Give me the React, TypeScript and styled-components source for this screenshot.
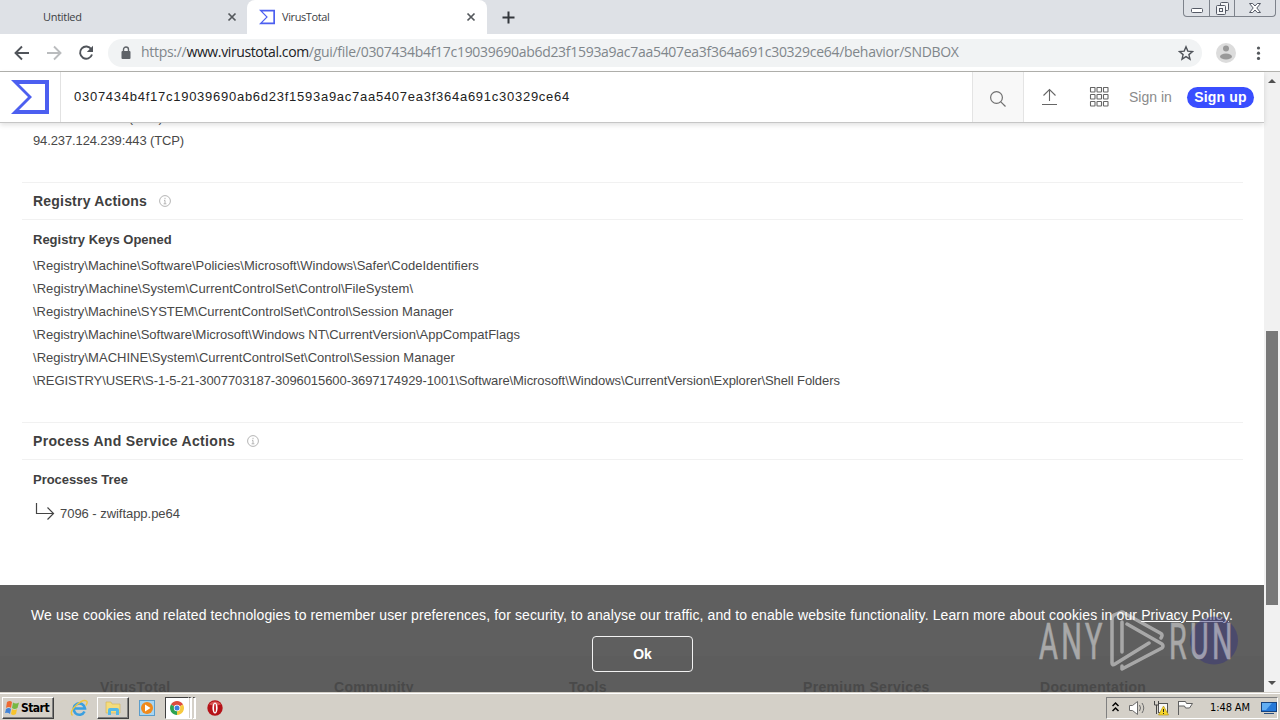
import React from 'react';
import styled, { createGlobalStyle } from 'styled-components';

const GlobalStyle = createGlobalStyle`
  * { box-sizing: border-box; }
  body { margin: 0; overflow: hidden; font-family: 'Liberation Sans', Arial, sans-serif; }
`;

const Desktop = styled.div`
  position: relative;
  display: flex;
  flex-direction: column;
  width: 1280px;
  height: 720px;
  overflow: hidden;
  background: #fff;
`;

const TabStrip = styled.div`
  display: flex;
  height: 34px;
  background: #dee1e6;
`;

const Tab = styled.div<{ $active?: boolean; $width: number }>`
  display: flex;
  align-items: center;
  width: ${(p) => p.$width}px;
  padding: 0 ${(p) => (p.$active ? '11px 0 12px' : '10px 0 43px')};
  border-radius: 8px 8px 0 0;
  background: ${(p) => (p.$active ? '#fff' : 'transparent')};
`;

const TabTitle = styled.span<{ $spacing: number; $gap?: number }>`
  flex: 1;
  margin-left: ${(p) => p.$gap || 0}px;
  padding-bottom: 2px;
  font-family: 'Open Sans', sans-serif;
  font-size: 11px;
  letter-spacing: ${(p) => p.$spacing}px;
  color: #3c4043;
`;

const NewTab = styled.div`
  display: flex;
  align-items: center;
  margin-left: 15px;
`;

const WindowControls = styled.div`
  display: flex;
  height: 17px;
  margin: 0 4px 0 auto;
  border: 1px solid #7d828b;
  border-top: 0;
  border-radius: 0 0 4px 4px;
`;

const WindowButton = styled.div<{ $width: number }>`
  display: flex;
  justify-content: center;
  width: ${(p) => p.$width}px;

  & + & {
    border-left: 1px solid #7d828b;
  }
`;

const Toolbar = styled.div`
  display: flex;
  align-items: center;
  height: 38px;
  padding: 0 14px;
  border-bottom: 1px solid #b2b2ae;
`;

const NavIcons = styled.div`
  display: flex;
  gap: 16px;
  width: 94px;
`;

const AddressBar = styled.div`
  display: flex;
  align-items: center;
  width: 1094px;
  height: 28px;
  padding: 0 8px 0 12px;
  border-radius: 14px;
  background: #f1f3f4;
`;

const Url = styled.div`
  flex: 1;
  margin-left: 9px;
  padding-bottom: 2px;
  font-family: 'Open Sans', sans-serif;
  font-size: 14px;
  letter-spacing: -0.29px;
  white-space: nowrap;
  color: #80868b;

  b {
    font-weight: 400;
    letter-spacing: -0.38px;
    color: #202124;
  }
`;

const Viewport = styled.div`
  display: flex;
  height: 620px;
`;

const Page = styled.div`
  position: relative;
  display: flex;
  flex-direction: column;
  width: 1264px;
  background: #fff;
`;

const Header = styled.header`
  z-index: 1;
  display: flex;
  align-items: center;
  flex: none;
  height: 51px;
  border-bottom: 1px solid #c6c6c6;
  background: #fff;
  box-shadow: 0 2px 5px rgba(0, 0, 0, 0.12);
`;

const LogoCell = styled.div`
  display: flex;
  align-items: center;
  width: 61px;
  height: 50px;
  padding-left: 11px;
  border-right: 1px solid #e2e2e2;
`;

const SearchText = styled.div`
  flex: 1;
  padding: 0 0 1px 13px;
  font-size: 13px;
  letter-spacing: 0.735px;
  color: #222;
`;

const SearchCell = styled.div`
  display: flex;
  align-items: center;
  justify-content: center;
  width: 52px;
  height: 50px;
  padding-top: 3px;
  border: solid #e4e4e4;
  border-width: 0 1px;
  background: #f8f8f8;
`;

const HeaderActions = styled.div`
  display: flex;
  align-items: center;
  width: 240px;
  padding-left: 16px;
`;

const SignIn = styled.span`
  width: 58px;
  margin-left: 19px;
  font-size: 14px;
  letter-spacing: 0;
  color: #8b8b8b;
`;

const SignUp = styled.span`
  width: 67px;
  height: 21px;
  border-radius: 11px;
  background: #394eff;
  font-size: 14px;
  font-weight: 700;
  line-height: 21px;
  letter-spacing: 0.15px;
  text-align: center;
  color: #fff;
`;

const Report = styled.main`
  flex: 1;
  min-height: 0;
  overflow: hidden;
  padding: 0 21px 0 22px;
`;

const List = styled.div<{ $shift?: number }>`
  margin-top: ${(p) => p.$shift || 0}px;
  padding-left: 11px;
`;

const Line = styled.div<{ $spacing?: number }>`
  height: 23px;
  font-size: 13px;
  line-height: 23px;
  letter-spacing: ${(p) => p.$spacing || 0}px;
  white-space: nowrap;
  color: #484848;
`;

const SectionTitle = styled.div<{ $spacing: number }>`
  display: flex;
  align-items: center;
  gap: 12px;
  height: 38px;
  margin-top: 30px;
  padding-left: 11px;
  border: solid #f1f1f1;
  border-width: 1px 0;
  font-size: 14px;
  font-weight: 700;
  letter-spacing: ${(p) => p.$spacing}px;
  color: #404040;
`;

const SubTitle = styled.div<{ $spacing?: number }>`
  height: 34px;
  padding-left: 11px;
  font-size: 13px;
  font-weight: 700;
  line-height: 39px;
  letter-spacing: ${(p) => p.$spacing || 0}px;
  color: #404040;
`;

const ProcessRow = styled.div`
  display: flex;
  align-items: center;
  gap: 5px;
  height: 38px;
  padding-left: 13px;
`;

const CookieBanner = styled.div`
  position: absolute;
  right: 0;
  bottom: 0;
  left: 0;
  display: flex;
  flex-direction: column;
  align-items: center;
  height: 107px;
  overflow: hidden;
  background: linear-gradient(#5f5f5f 71px, #5d5d5d 71px);
`;

const CookieText = styled.p`
  align-self: flex-start;
  height: 20px;
  margin: 20px 0 11px 31px;
  font-size: 14px;
  line-height: 20px;
  letter-spacing: 0.118px;
  white-space: nowrap;
  color: #fff;
`;

const OkButton = styled.button`
  width: 101px;
  height: 36px;
  flex: none;
  margin-left: 21px;
  padding: 0;
  border: 1px solid #f2f2f2;
  border-radius: 4px;
  background: transparent;
  font: 700 14px 'Liberation Sans', sans-serif;
  color: #fff;
`;

const FooterLinks = styled.div`
  display: grid;
  grid-template-columns: 234px 235px 234px 237px auto;
  align-self: flex-start;
  margin: 7px 0 0 100px;
  font-size: 14px;
  font-weight: 700;
  line-height: 16px;
  letter-spacing: 0.33px;
  color: #494949;
`;

const Scrollbar = styled.div`
  display: flex;
  flex-direction: column;
  align-items: center;
  width: 16px;
  padding: 7px 0;
  background: #f1f1f1;
`;

const Thumb = styled.div`
  width: 12px;
  height: 274px;
  margin: 248px 0 auto;
  background: #787878;
`;

const Arrow = styled.div<{ $down?: boolean }>`
  width: 8px;
  height: 4px;
  background: #505050;
  clip-path: ${(p) => (p.$down ? 'polygon(0 0, 100% 0, 50% 100%)' : 'polygon(50% 0, 100% 100%, 0 100%)')};
`;

const Taskbar = styled.div`
  display: flex;
  align-items: center;
  height: 28px;
  padding: 2px 2px 0;
  border-top: 1px solid #d4d0c8;
  background: #d4d0c8;
  box-shadow: inset 0 1px #fff;
`;

const TaskButton = styled.div<{ $width: number; $flat?: boolean; $pressed?: boolean }>`
  display: flex;
  align-items: center;
  justify-content: center;
  width: ${(p) => p.$width}px;
  height: 22px;
  border: ${(p) => (p.$flat ? 0 : 1)}px solid;
  border-color: ${(p) => (p.$pressed ? '#404040 #fff #fff #404040' : '#fff #404040 #404040 #fff')};
  box-shadow: ${(p) => (p.$flat || p.$pressed ? 'none' : 'inset -1px -1px #808080')};
  background: ${(p) => (p.$pressed ? '#fff' : '#d4d0c8')};
`;

const BrowserLauncher = styled(TaskButton)`
  padding-left: 7px;
`;

const StartLabel = styled.span`
  margin: 0 2px 0 1px;
  font: 700 12px 'DejaVu Sans Condensed', 'DejaVu Sans', sans-serif;
  letter-spacing: -0.5px;
  color: #000;
`;

const WindowStack = styled.div`
  width: 3px;
  height: 22px;
  margin-right: 1px;
  border: solid #fff;
  border-width: 1px 2px 1px 0;
  border-top-color: #404040;
`;

const Tray = styled.div`
  display: flex;
  align-items: center;
  width: 172px;
  height: 22px;
  margin-left: auto;
  padding-left: 5px;
  border: 1px solid;
  border-color: #808080 #fff #fff #808080;
`;

const Clock = styled.span`
  width: 51px;
  margin-left: 16px;
  font: 11px 'DejaVu Sans Condensed', 'DejaVu Sans', sans-serif;
  letter-spacing: -0.1px;
  white-space: nowrap;
  color: #000;
`;

const Watermark = styled.svg`
  position: absolute;
  top: 602px;
  left: 1030px;
`;

const registryKeys = [
  { path: '\\Registry\\Machine\\Software\\Policies\\Microsoft\\Windows\\Safer\\CodeIdentifiers', spacing: 0 },
  { path: '\\Registry\\Machine\\System\\CurrentControlSet\\Control\\FileSystem\\', spacing: 0.06 },
  { path: '\\Registry\\Machine\\SYSTEM\\CurrentControlSet\\Control\\Session Manager', spacing: 0.01 },
  { path: '\\Registry\\Machine\\Software\\Microsoft\\Windows NT\\CurrentVersion\\AppCompatFlags', spacing: 0 },
  { path: '\\Registry\\MACHINE\\System\\CurrentControlSet\\Control\\Session Manager', spacing: 0.02 },
  {
    path: '\\REGISTRY\\USER\\S-1-5-21-3007703187-3096015600-3697174929-1001\\Software\\Microsoft\\Windows\\CurrentVersion\\Explorer\\Shell Folders',
    spacing: -0.075,
  },
];

const VtLogo: React.FC<{ width: number; height: number }> = ({ width, height }) => (
  <svg width={width} height={height} viewBox="0 0 38 34">
    <path fill="#4c5ff0" fillRule="evenodd" d="M0 0H38V34H0L17 17ZM8 4L21 17L8 30H34V4Z" />
  </svg>
);

const CloseIcon = () => (
  <svg width="10" height="10" viewBox="0 0 10 10">
    <path d="M1.5 1.5l7 7M8.5 1.5l-7 7" stroke="#54585c" strokeWidth="1.7" />
  </svg>
);

const InfoIcon = () => (
  <svg width="12" height="12" viewBox="0 0 12 12" fill="none" stroke="#b4b4b4">
    <circle cx="6" cy="6" r="5.4" />
    <path d="M6 2.8v1.4M5 5.4h1v3.4M4.6 8.8h2.8" />
  </svg>
);

const App: React.FC = () => {
  return (
    <Desktop>
      <GlobalStyle />
      <TabStrip>
        <Tab $width={247}>
          <TabTitle $spacing={-0.3}>Untitled</TabTitle>
          <CloseIcon />
        </Tab>
        <Tab $active $width={240}>
          <VtLogo width={16} height={16} />
          <TabTitle $spacing={-0.4} $gap={7}>VirusTotal</TabTitle>
          <CloseIcon />
        </Tab>
        <NewTab>
          <svg width="13" height="13" viewBox="0 0 13 13">
            <path d="M6.5 .5v12M.5 6.5h12" stroke="#33373c" strokeWidth="2" />
          </svg>
        </NewTab>
        <WindowControls>
          <WindowButton $width={25}>
            <svg width="12" height="16" viewBox="0 0 12 16">
              <rect x=".5" y="8.5" width="11" height="4" rx="1" fill="#fff" stroke="#555a66" />
            </svg>
          </WindowButton>
          <WindowButton $width={25}>
            <svg width="13" height="16" viewBox="0 0 13 16" fill="#f4f5f7" stroke="#555a66">
              <rect x="4.5" y="2.5" width="8" height="8" rx="1" />
              <rect x=".5" y="5.5" width="9" height="9" rx="1" />
              <rect x="3.5" y="8.5" width="3" height="3" />
            </svg>
          </WindowButton>
          <WindowButton $width={41}>
            <svg width="12" height="16" viewBox="0 0 12 16">
              <path
                d="M.5 3.5h3.2L6 6l2.300-2.500h3.200L7.800 8l3.700 4.500H8.300L6 10l-2.300 2.500H.5L4.200 8z"
                fill="#fff"
                stroke="#555a66"
              />
            </svg>
          </WindowButton>
        </WindowControls>
      </TabStrip>

      <Toolbar>
        <NavIcons>
          <svg width="16" height="16" viewBox="0 0 16 16" fill="none" stroke="#50545a" strokeWidth="1.9">
            <path d="M15 8H2.500M8 1.500L1.500 8L8 14.500" />
          </svg>
          <svg width="16" height="16" viewBox="0 0 16 16" fill="none" stroke="#babcbe" strokeWidth="1.9">
            <path d="M1 8h12.500M8 1.500L14.500 8L8 14.500" />
          </svg>
          <svg width="16" height="16" viewBox="0 0 16 16">
            <path d="M13.300 4.300A6.100 6.100 0 1 0 14 9.500" fill="none" stroke="#50545a" strokeWidth="1.9" />
            <path d="M15 .8v6.200H8.800z" fill="#50545a" />
          </svg>
        </NavIcons>
        <AddressBar>
          <svg width="12" height="14" viewBox="0 0 12 14">
            <rect x="1.5" y="5" width="9" height="8" rx="1" fill="#5f6368" />
            <path d="M3.500 6V3.500a2.500 2.500 0 0 1 5 0V6" fill="none" stroke="#5f6368" strokeWidth="1.4" />
          </svg>
          <Url>
            https://<b>www.virustotal.com</b>
            /gui/file/0307434b4f17c19039690ab6d23f1593a9ac7aa5407ea3f364a691c30329ce64/behavior/SNDBOX
          </Url>
          <svg width="16" height="16" viewBox="0 0 16 16">
            <path
              d="M8 1.800l1.800 4.300 4.700.4-3.600 3.100 1.100 4.600L8 11.700l-4 2.500 1.100-4.600L1.500 6.500l4.700-.4z"
              fill="none"
              stroke="#50545a"
              strokeWidth="1.4"
            />
          </svg>
        </AddressBar>
        <svg width="64" height="20" viewBox="0 0 64 20">
          <circle cx="24" cy="10" r="10" fill="#dcdcdc" />
          <circle cx="24" cy="5.500" r="3" fill="#999" />
          <ellipse cx="24" cy="13.500" rx="6" ry="3" fill="#999" />
          <g fill="#54585c">
            <circle cx="56.500" cy="5" r="1.600" />
            <circle cx="56.500" cy="10.200" r="1.600" />
            <circle cx="56.500" cy="15.400" r="1.600" />
          </g>
        </svg>
      </Toolbar>

      <Viewport>
        <Page>
          <Header>
            <LogoCell>
              <VtLogo width={38} height={34} />
            </LogoCell>
            <SearchText>0307434b4f17c19039690ab6d23f1593a9ac7aa5407ea3f364a691c30329ce64</SearchText>
            <SearchCell>
              <svg width="16" height="16" viewBox="0 0 16 16" fill="none" stroke="#707070" strokeWidth="1.2">
                <circle cx="6.500" cy="6.500" r="5.900" />
                <path d="M10.800 10.800L15.500 15.500" />
              </svg>
            </SearchCell>
            <HeaderActions>
              <svg width="70" height="20" viewBox="0 0 70 20" fill="none" stroke="#666" strokeWidth="1.1">
                <path d="M2 17.500h15M9.500 14V3M3.500 8.500L9.500 2.500l6 6" />
                {[0.5, 7.5, 14.5].map((y) =>
                  [50.5, 57, 63.5].map((x) => <rect key={`${x}-${y}`} x={x} y={y} width="4.5" height="4.500" rx=".5" />)
                )}
              </svg>
              <SignIn>Sign in</SignIn>
              <SignUp>Sign up</SignUp>
            </HeaderActions>
          </Header>

          <Report>
            <List $shift={-17}>
              <Line $spacing={-0.12}>13.107.4.50:443 (TCP)</Line>
              <Line $spacing={-0.12}>94.237.124.239:443 (TCP)</Line>
            </List>
            <SectionTitle $spacing={0.2}>
              Registry Actions <InfoIcon />
            </SectionTitle>
            <SubTitle>Registry Keys Opened</SubTitle>
            <List>
              {registryKeys.map((key) => (
                <Line key={key.path} $spacing={key.spacing}>{key.path}</Line>
              ))}
            </List>
            <SectionTitle $spacing={0.32}>
              Process And Service Actions <InfoIcon />
            </SectionTitle>
            <SubTitle $spacing={-0.04}>Processes Tree</SubTitle>
            <ProcessRow>
              <svg width="20" height="20" viewBox="0 0 20 20" fill="none" stroke="#444" strokeWidth="1.2">
                <path d="M1.500 0v10.500H18.500M12.500 4.500l6 6-6 6" />
              </svg>
              <Line $spacing={-0.04}>7096 - zwiftapp.pe64</Line>
            </ProcessRow>
          </Report>

          <CookieBanner>
            <CookieText>
              We use cookies and related technologies to remember user preferences, for security, to analyse our
              traffic, and to enable website functionality. Learn more about cookies in our <u>Privacy Policy</u>.
            </CookieText>
            <OkButton>Ok</OkButton>
            <FooterLinks>
              <span>VirusTotal</span>
              <span>Community</span>
              <span>Tools</span>
              <span>Premium Services</span>
              <span>Documentation</span>
            </FooterLinks>
          </CookieBanner>
        </Page>
        <Scrollbar>
          <Arrow />
          <Thumb />
          <Arrow $down />
        </Scrollbar>
      </Viewport>

      <Taskbar>
        <TaskButton $width={52}>
          <svg width="15" height="16" viewBox="0 0 15 16">
            <path d="M2 2q3-2 5 0L6 8Q4 6 1 8z" fill="#ee6a32" />
            <path d="M8 2.500q3 2 6 0L12.500 8q-3 2-5.500 0z" fill="#77b843" />
            <path d="M1 9q3-2 5 0l-1 5q-2-2-5-1z" fill="#4284d8" />
            <path d="M7 9q3 2 5 0l-1 5q-3 2-5 0z" fill="#f7c42e" />
          </svg>
          <StartLabel>Start</StartLabel>
        </TaskButton>
        <BrowserLauncher $flat $width={43}>
          <svg width="18" height="18" viewBox="0 0 18 18" fill="none">
            <path d="M14.500 12.500A5.700 5.700 0 1 1 15 9.500H5" stroke="#3a9fe0" strokeWidth="2.6" />
            <path d="M2.500 16.500Q-1 13 6 6.500t10.500-4.500q1.500 1-.5 4.500" stroke="#f0c53c" strokeWidth="1.4" />
          </svg>
        </BrowserLauncher>
        <TaskButton $width={32}>
          <svg width="16" height="16" viewBox="0 0 16 16">
            <path d="M1 2h5l1 2h8v9H1z" fill="#f4dc7d" stroke="#d3b452" strokeWidth=".6" />
            <path d="M3 15v-5q0-2 2-2h7q2 0 2 2v5h-3v-4H6v4z" fill="#55b9e8" />
          </svg>
        </TaskButton>
        <TaskButton $flat $width={36}>
          <svg width="16" height="16" viewBox="0 0 16 16">
            <rect x=".5" y=".5" width="15" height="15" fill="#a8d6f2" stroke="#5b9dcb" />
            <circle cx="8" cy="8" r="6" fill="#f08a1c" />
            <path d="M6 4.500v7l5.500-3.500z" fill="#fff" />
          </svg>
        </TaskButton>
        <TaskButton $pressed $width={24}>
          <svg width="14" height="14" viewBox="0 0 14 14">
            <path d="M7 7L.94 3.500A7 7 0 0 1 13.060 3.500z" fill="#dd4b3e" />
            <path d="M7 7L.94 3.500A7 7 0 0 0 7 14z" fill="#2da351" />
            <path d="M7 7L13.060 3.500A7 7 0 0 1 7 14z" fill="#f6ca40" />
            <circle cx="7" cy="7" r="3.200" fill="#fff" />
            <circle cx="7" cy="7" r="2.500" fill="#3f7fe0" />
          </svg>
        </TaskButton>
        <WindowStack />
        <WindowStack />
        <TaskButton $flat $width={36}>
          <svg width="16" height="16" viewBox="0 0 16 16">
            <circle cx="8" cy="8" r="7.700" fill="#b51218" />
            <path d="M2 4.500a7 6 0 0 1 12 0q-6 2-12 0z" fill="#d95653" />
            <ellipse cx="8" cy="8" rx="2.600" ry="5.500" fill="#fff" />
            <ellipse cx="8" cy="8" rx="1" ry="4.300" fill="#c8252a" />
          </svg>
        </TaskButton>
        <Tray>
          <svg width="82" height="18" viewBox="0 0 82 18">
            <path d="M.5 7l3-3 3 3M.5 12l3-3 3 3" fill="none" stroke="#000" strokeWidth="1.5" />
            <path d="M17.500 6.500h3l5-4v13l-5-4h-3z" fill="#fff" stroke="#6c6c6c" />
            <path d="M27.500 6q2 3 0 6M30 4q3.500 5 0 10" fill="none" stroke="#6c6c6c" />
            <rect x="46.500" y="4.500" width="9" height="9" fill="#f7f7f7" stroke="#555" />
            <path d="M42.500 2v4h4V2M44.500 6v9" fill="none" stroke="#444" />
            <path d="M51.500 7l5 9h-10z" fill="#f6d52a" stroke="#ae8d0b" strokeWidth=".6" />
            <path d="M51.500 10v3M51.500 14v1" stroke="#222" />
            <path d="M66.500 2v14M66.500 2.500h7l1 2h6l-3 4.500h-4l-1-2h-6" fill="#fff" stroke="#606060" />
          </svg>
          <Clock>1:48 AM</Clock>
          <svg width="16" height="14" viewBox="0 0 16 14">
            <rect x=".5" y="1.500" width="15" height="9" fill="#2679d8" stroke="#16437e" />
            <path d="M1 2h10L5 9H1z" fill="#62aef2" />
            <path d="M3 12.500h10" stroke="#284f80" />
          </svg>
        </Tray>
      </Taskbar>

      <Watermark width="220" height="76" viewBox="0 0 220 76">
        <circle cx="184" cy="38.500" r="24" fill="#36357c" opacity=".48" />
        <g opacity=".46">
          <g fill="#fff" stroke="#fff" strokeWidth=".6" fontFamily="Roboto, sans-serif" fontSize="50" letterSpacing="6">
            <text x="9" y="56.500" textLength="67" lengthAdjust="spacingAndGlyphs">ANY</text>
            <text x="139" y="56.500" textLength="67" lengthAdjust="spacingAndGlyphs">RUN</text>
          </g>
          <path
            d="M92 50V20M119 41L85 62q-3 2-3-1V17q0-3 3-4.500l5-2q2-1 4 .5l37 20.500q2 1.500 0 4.500M97 22l35 20q2 2 0 4L92 67v-3"
            fill="none"
            stroke="#fff"
            strokeWidth="3.5"
            strokeLinejoin="round"
            strokeLinecap="round"
          />
        </g>
      </Watermark>
    </Desktop>
  );
};

export default App;
